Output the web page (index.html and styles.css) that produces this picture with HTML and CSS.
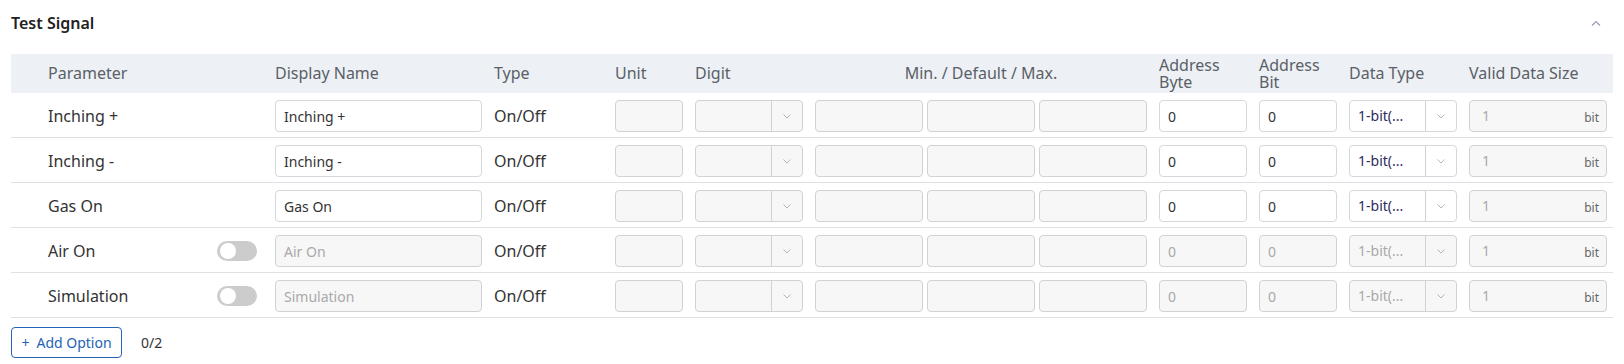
FILE: index.html
```html
<!DOCTYPE html>
<html lang="en">
<head>
  <meta charset="UTF-8" />
  <title>Test Signal</title>
  <link rel="stylesheet" href="styles.css">
</head>
<body>
  <div class="panel">
    <div class="panel-head">
      <h2>Test Signal</h2>
      <svg class="collapse" width="10" height="6" viewBox="0 0 10 6"><path d="M1 5.5L5 1.5L9 5.5" fill="none" stroke="#9a9db6" stroke-width="1.2"/></svg>
    </div>

    <div class="table">
      <div class="row head">
        <div>Parameter</div>
        <div>Display Name</div>
        <div>Type</div>
        <div>Unit</div>
        <div>Digit</div>
        <div class="center">Min. / Default / Max.</div>
        <div>Address<br>Byte</div>
        <div>Address<br>Bit</div>
        <div>Data Type</div>
        <div>Valid Data Size</div>
      </div>

      <!-- enabled rows -->
      <div class="row">
        <div class="param">Inching +</div>
        <input class="field" value="Inching +">
        <div>On/Off</div>
        <input class="field off">
        <div class="select off"><span></span><i><svg width="8" height="5" viewBox="0 0 8 5"><path d="M0.5 0.5L4 4L7.5 0.5" fill="none" stroke="#b5b5b5"/></svg></i></div>
        <div class="triple"><input class="field off"><input class="field off"><input class="field off"></div>
        <input class="field" value="0">
        <input class="field" value="0">
        <div class="select"><span>1-bit(...</span><i><svg width="8" height="5" viewBox="0 0 8 5"><path d="M0.5 0.5L4 4L7.5 0.5" fill="none" stroke="#b5b5b5"/></svg></i></div>
        <div class="size"><span>1</span><small>bit</small></div>
      </div>

      <div class="row">
        <div class="param">Inching -</div>
        <input class="field" value="Inching -">
        <div>On/Off</div>
        <input class="field off">
        <div class="select off"><span></span><i><svg width="8" height="5" viewBox="0 0 8 5"><path d="M0.5 0.5L4 4L7.5 0.5" fill="none" stroke="#b5b5b5"/></svg></i></div>
        <div class="triple"><input class="field off"><input class="field off"><input class="field off"></div>
        <input class="field" value="0">
        <input class="field" value="0">
        <div class="select"><span>1-bit(...</span><i><svg width="8" height="5" viewBox="0 0 8 5"><path d="M0.5 0.5L4 4L7.5 0.5" fill="none" stroke="#b5b5b5"/></svg></i></div>
        <div class="size"><span>1</span><small>bit</small></div>
      </div>

      <div class="row">
        <div class="param">Gas On</div>
        <input class="field" value="Gas On">
        <div>On/Off</div>
        <input class="field off">
        <div class="select off"><span></span><i><svg width="8" height="5" viewBox="0 0 8 5"><path d="M0.5 0.5L4 4L7.5 0.5" fill="none" stroke="#b5b5b5"/></svg></i></div>
        <div class="triple"><input class="field off"><input class="field off"><input class="field off"></div>
        <input class="field" value="0">
        <input class="field" value="0">
        <div class="select"><span>1-bit(...</span><i><svg width="8" height="5" viewBox="0 0 8 5"><path d="M0.5 0.5L4 4L7.5 0.5" fill="none" stroke="#b5b5b5"/></svg></i></div>
        <div class="size"><span>1</span><small>bit</small></div>
      </div>

      <!-- optional rows, switched off -->
      <div class="row">
        <div class="param">Air On <span class="toggle"></span></div>
        <input class="field off" placeholder="Air On">
        <div>On/Off</div>
        <input class="field off">
        <div class="select off"><span></span><i><svg width="8" height="5" viewBox="0 0 8 5"><path d="M0.5 0.5L4 4L7.5 0.5" fill="none" stroke="#b5b5b5"/></svg></i></div>
        <div class="triple"><input class="field off"><input class="field off"><input class="field off"></div>
        <input class="field off" placeholder="0">
        <input class="field off" placeholder="0">
        <div class="select off"><span>1-bit(...</span><i><svg width="8" height="5" viewBox="0 0 8 5"><path d="M0.5 0.5L4 4L7.5 0.5" fill="none" stroke="#b5b5b5"/></svg></i></div>
        <div class="size"><span>1</span><small>bit</small></div>
      </div>

      <div class="row">
        <div class="param">Simulation <span class="toggle"></span></div>
        <input class="field off" placeholder="Simulation">
        <div>On/Off</div>
        <input class="field off">
        <div class="select off"><span></span><i><svg width="8" height="5" viewBox="0 0 8 5"><path d="M0.5 0.5L4 4L7.5 0.5" fill="none" stroke="#b5b5b5"/></svg></i></div>
        <div class="triple"><input class="field off"><input class="field off"><input class="field off"></div>
        <input class="field off" placeholder="0">
        <input class="field off" placeholder="0">
        <div class="select off"><span>1-bit(...</span><i><svg width="8" height="5" viewBox="0 0 8 5"><path d="M0.5 0.5L4 4L7.5 0.5" fill="none" stroke="#b5b5b5"/></svg></i></div>
        <div class="size"><span>1</span><small>bit</small></div>
      </div>
    </div>

    <div class="foot">
      <button class="add"><span class="plus">+</span>Add Option</button>
      <span class="count">0/2</span>
    </div>
  </div>
</body>
</html>
```

FILE: styles.css
```css
body {
  margin: 0;
  font-family: "Noto Sans", "Open Sans", sans-serif;
  color: #333;
  background: #fff;
}

.panel {
  padding: 0 11px;
}

.panel-head {
  display: flex;
  align-items: flex-start;
  justify-content: space-between;
  padding: 12px 12px 0 0;
  height: 42px;
  box-sizing: border-box;
}

.panel-head h2 {
  margin: 0;
  font-size: 16px;
  font-weight: 600;
  line-height: 22px;
  color: #222;
}

.collapse {
  margin-top: 8px;
}

.panel-head + .table {
  margin-top: 12px;
}

.row {
  display: grid;
  grid-template-columns: 215px 207px 109px 68px 108px 332px 88px 78px 108px 138px;
  column-gap: 12px;
  align-items: center;
  padding: 2px 6px 0 37px;
  height: 45px;
  box-sizing: border-box;
  border-bottom: 1px solid #dde1e6;
  font-size: 16px;
  line-height: 22px;
}

.row.head {
  background: #edf0f4;
  height: 39px;
  padding-top: 0;
  border-bottom: none;
  color: #5a5f68;
  line-height: 17px;
}

.center {
  text-align: center;
}

.param {
  display: flex;
  align-items: center;
  justify-content: space-between;
  padding-right: 6px;
}

.toggle {
  width: 40px;
  height: 20px;
  border-radius: 10px;
  background: #cccccc;
  position: relative;
}

.toggle::after {
  content: "";
  position: absolute;
  left: 3px;
  top: 2px;
  width: 16px;
  height: 16px;
  border-radius: 50%;
  background: #fff;
}

.field {
  width: 100%;
  height: 32px;
  box-sizing: border-box;
  border: 1px solid #d4d7dc;
  border-radius: 4px;
  background: #fff;
  padding: 0 8px;
  font-family: inherit;
  font-size: 14px;
  color: #333;
  outline: none;
}

.field.off {
  background: #f7f7f7;
  border-color: #d2d2d2;
}

.field::placeholder {
  color: #a9a9a9;
}

.triple {
  display: grid;
  grid-template-columns: repeat(3, 1fr);
  gap: 4px;
}

.select {
  display: flex;
  height: 32px;
  box-sizing: border-box;
  border: 1px solid #d4d7dc;
  border-radius: 4px;
  background: #fff;
  font-size: 14px;
  color: #2e2b5e;
}

.select span {
  flex: 1;
  padding-left: 8px;
  line-height: 30px;
  white-space: nowrap;
  overflow: hidden;
}

.select i {
  width: 30px;
  border-left: 1px solid #d2d2d2;
  display: flex;
  align-items: center;
  justify-content: center;
}

.select.off {
  background: #f7f7f7;
  border-color: #d2d2d2;
  color: #a9a9a9;
}

.size {
  display: flex;
  align-items: center;
  justify-content: space-between;
  height: 32px;
  box-sizing: border-box;
  border: 1px solid #d2d2d2;
  border-radius: 4px;
  background: #f7f7f7;
  padding: 0 7px 0 12px;
  font-size: 14px;
  color: #a9a9a9;
}

.size small {
  font-size: 12px;
  color: #666;
  padding-top: 3px;
}

.foot {
  display: flex;
  align-items: center;
  gap: 19px;
  margin-top: 9px;
}

.add {
  height: 31px;
  width: 111px;
  border: 1px solid #2563b4;
  border-radius: 4px;
  background: #fff;
  color: #2563b4;
  font-family: inherit;
  font-size: 14px;
  padding: 0;
  cursor: pointer;
}

.plus {
  margin-right: 7px;
}

.count {
  font-size: 14px;
  color: #333;
}
```
